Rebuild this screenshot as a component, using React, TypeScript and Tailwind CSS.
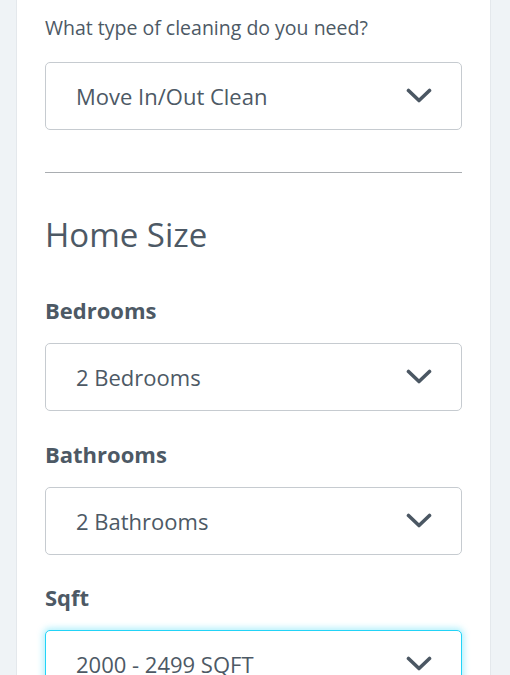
import React from "react";

function Chevron() {
  return (
    <svg width="26" height="16" viewBox="0 0 26 16" fill="none" className="shrink-0">
      <path d="M2.5 2.5 L13 12.5 L23.5 2.5" stroke="#4b5763" strokeWidth="3.6" strokeLinecap="round" strokeLinejoin="round" />
    </svg>
  );
}

function SelectBox({ value, focused = false }: { value: string; focused?: boolean }) {
  return (
    <div
      className={
        focused
          ? "flex h-[68px] items-center justify-between rounded-[5px] border border-[#22d3f7] bg-white pl-[30px] pr-[29px] shadow-[0_0_6px_2px_rgba(34,211,247,0.35)]"
          : "flex h-[68px] items-center justify-between rounded-[5px] border border-[#c6cbd0] bg-white pl-[30px] pr-[29px]"
      }
    >
      <span className="whitespace-nowrap text-[22px] leading-7 text-[#4d5965]">{value}</span>
      <Chevron />
    </div>
  );
}

export default function App() {
  return (
    <div className="h-[675px] overflow-hidden bg-[#eff3f6] pl-4 pr-[19px] font-['Open_Sans',sans-serif]">
      <div className="min-h-[675px] border-x border-[#e4e8ec] bg-white px-7 pt-4">
        <p className="text-[19.5px] leading-6 text-[#4d5965]">What type of cleaning do you need?</p>
        <div className="mt-[22px]">
          <SelectBox value="Move In/Out Clean" />
        </div>
        <hr className="mt-[42px] border-t border-[#a9adb1]" />
        <h2 className="mt-[42px] text-[33px] font-normal leading-10 text-[#4d5965]">Home Size</h2>
        <label className="mt-[41px] block text-[22px] font-bold leading-7 text-[#4d5965]">Bedrooms</label>
        <div className="mt-[19px]">
          <SelectBox value="2 Bedrooms" />
        </div>
        <label className="mt-[29px] block text-[22px] font-bold leading-7 text-[#4d5965]">Bathrooms</label>
        <div className="mt-[19px]">
          <SelectBox value="2 Bathrooms" />
        </div>
        <label className="mt-[28px] block text-[22px] font-bold leading-7 text-[#4d5965]">Sqft</label>
        <div className="mt-[19px]">
          <SelectBox value="2000 - 2499 SQFT" focused />
        </div>
      </div>
    </div>
  );
}
